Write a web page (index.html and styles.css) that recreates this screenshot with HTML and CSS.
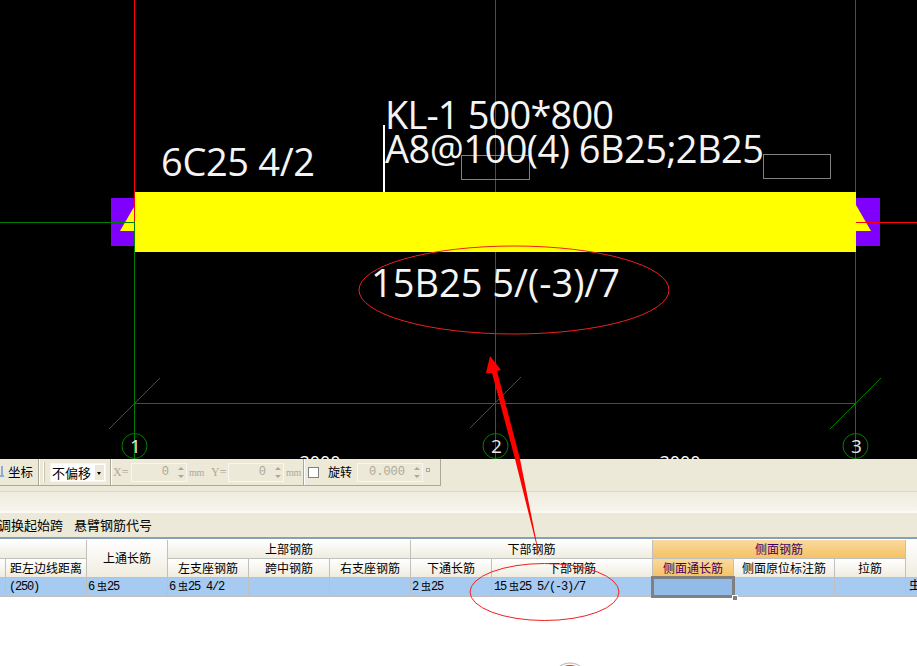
FILE: index.html
```html
<!DOCTYPE html>
<html lang="zh-CN">
<head>
    <meta charset="UTF-8">
    <title>梁平法表格</title>
    <link rel="stylesheet" href="styles.css">
</head>
<body>
    <div class="page">
        <!-- drawing area -->
        <svg class="canvas" width="917" height="459" viewBox="0 0 917 459">
            <rect class="col-box" x="111" y="198" width="24" height="48"/>
            <rect class="col-box" x="856" y="198" width="24" height="48"/>
            <polygon class="beam" points="134,207 120,231 134,231"/>
            <polygon class="beam" points="856,205 871,231 856,231"/>

            <line class="red" x1="134.5" y1="0" x2="134.5" y2="222"/>
            <line class="green" x1="134.5" y1="222" x2="134.5" y2="459"/>
            <line class="green" x1="0" y1="222.5" x2="134" y2="222.5"/>
            <line class="red" x1="855.5" y1="0" x2="855.5" y2="192"/>
            <line class="red" x1="856" y1="222.5" x2="917" y2="222.5"/>
            <line class="green" x1="855.5" y1="252" x2="855.5" y2="459"/>
            <line class="red" x1="495.5" y1="0" x2="495.5" y2="192"/>
            <line class="green" x1="495.5" y1="252" x2="495.5" y2="459"/>
            <line class="green" x1="134" y1="403.5" x2="856" y2="403.5"/>
            <line class="green" x1="109" y1="429" x2="160" y2="378"/>
            <line class="green" x1="470" y1="428" x2="521" y2="377"/>
            <line class="green" x1="830" y1="429" x2="881" y2="378"/>

            <rect class="beam" x="135" y="192" width="721" height="60"/>
            <line class="leader" x1="384" y1="125" x2="384" y2="192"/>
            <rect class="input-box" x="461.5" y="155.5" width="68" height="24"/>
            <rect class="input-box" x="763.5" y="154.5" width="67" height="24"/>

            <text class="label" x="385" y="129" textLength="229">KL-1 500*800</text>
            <text class="label" x="385" y="163" textLength="379">A8@100(4) 6B25;2B25</text>
            <text class="label" x="161" y="176" textLength="154">6C25 4/2</text>
            <text class="label" x="371" y="297" textLength="249">15B25 5/(-3)/7</text>

            <circle class="axis-ring" cx="134.5" cy="446" r="12.5"/>
            <circle class="axis-ring" cx="495.5" cy="446" r="12.5"/>
            <circle class="axis-ring" cx="855.5" cy="446" r="12.5"/>
            <text class="axis-num" x="135.5" y="453">1</text>
            <text class="axis-num" x="496.5" y="453">2</text>
            <text class="axis-num" x="856.5" y="453">3</text>
            <text class="dim" x="320" y="469">3000</text>
            <text class="dim" x="680" y="469">3000</text>
        </svg>

        <!-- offset toolbar -->
        <div class="toolbar-row">
            <div class="toolbar">
                <svg class="coord-icon" width="4" height="16" viewBox="0 0 4 16">
                    <path d="M2 2v9M0 12h4" fill="none" stroke="#2a6fd0" stroke-width="1"/>
                </svg>
                <span class="tool-label coord-label">坐标</span>
                <span class="sep"></span>
                <span class="grip"></span>
                <div class="select">
                    <span class="select-text">不偏移</span>
                    <span class="select-btn"></span>
                </div>
                <span class="sep sep-b"></span>
                <span class="coord-name">X=</span>
                <div class="spin">
                    <span class="spin-value">0</span>
                    <span class="spin-arrows"><i class="up"></i><i class="down"></i></span>
                </div>
                <span class="unit">mm</span>
                <span class="coord-name coord-y">Y=</span>
                <div class="spin">
                    <span class="spin-value">0</span>
                    <span class="spin-arrows"><i class="up"></i><i class="down"></i></span>
                </div>
                <span class="unit">mm</span>
                <span class="sep sep-c"></span>
                <span class="check"></span>
                <span class="tool-label rotate">旋转</span>
                <div class="spin spin-wide">
                    <span class="spin-value">0.000</span>
                    <span class="spin-arrows"><i class="up"></i><i class="down"></i></span>
                </div>
                <span class="degree"></span>
            </div>
        </div>
        <div class="strip"></div>
        <div class="action-row">
            <span>调换起始跨</span>
            <span>悬臂钢筋代号</span>
        </div>

        <!-- span table -->
        <div class="grid">
            <div class="head c-blank"></div>
            <div class="head c-top">上通长筋</div>
            <div class="head c-upper">上部钢筋</div>
            <div class="head c-lower">下部钢筋</div>
            <div class="head side c-side">侧面钢筋</div>
            <div class="head c-last"></div>

            <div class="head"></div>
            <div class="head">距左边线距离</div>
            <div class="head">左支座钢筋</div>
            <div class="head">跨中钢筋</div>
            <div class="head">右支座钢筋</div>
            <div class="head">下通长筋</div>
            <div class="head">下部钢筋</div>
            <div class="head side">侧面通长筋</div>
            <div class="head">侧面原位标注筋</div>
            <div class="head">拉筋</div>

            <div class="cell"></div>
            <div class="cell cell-first">(250)</div>
            <div class="cell">6<b>虫</b>25</div>
            <div class="cell">6<b>虫</b>25 4/2</div>
            <div class="cell"></div>
            <div class="cell"></div>
            <div class="cell">2<b>虫</b>25</div>
            <div class="cell cell-wide">15<b>虫</b>25 5/(-3)/7</div>
            <div class="cell selected"><span class="handle"></span></div>
            <div class="cell"></div>
            <div class="cell"></div>
            <div class="cell cell-end"><b>虫</b></div>
        </div>

        <!-- markup drawn over the screenshot -->
        <svg class="markup" width="917" height="666" viewBox="0 0 917 666">
            <ellipse class="mark" cx="514" cy="290" rx="155" ry="44"/>
            <ellipse class="mark" cx="544.5" cy="592" rx="74.5" ry="28.5"/>
            <polygon class="arrow" points="490,356 501,370 497,371 520,459 540,559 515,459 492,373 486,373"/>
            <circle class="stamp" cx="570" cy="681" r="18"/>
            <circle class="stamp-core" cx="570" cy="681" r="16"/>
        </svg>
    </div>
</body>
</html>
```

FILE: styles.css
```css
* {
    margin: 0;
    padding: 0;
    box-sizing: border-box;
}

body {
    background-color: white;
    color: #000;
    font-family: "Noto Sans CJK SC", sans-serif;
    font-size: 12px;
    overflow: hidden;
}

.page {
    position: relative;
    width: 917px;
    height: 666px;
    overflow: hidden;
}

/* drawing */
.canvas {
    display: block;
    background-color: #000;
}

.col-box { fill: #7f00ff; }
.beam { fill: #ffff00; }
.red { stroke: #ff0000; stroke-width: 1; }
.green { stroke: #008000; stroke-width: 1; }
.leader { stroke: #fff; stroke-width: 2; }

.input-box {
    fill: none;
    stroke: #808080;
    stroke-width: 1;
}

.label {
    fill: #f4f4f4;
    font-family: "Open Sans", sans-serif;
    font-size: 38px;
}

.axis-ring {
    fill: none;
    stroke: #008000;
    stroke-width: 1;
}

.axis-num {
    fill: #e8e8e8;
    font-family: "Open Sans", sans-serif;
    font-size: 19px;
    text-anchor: middle;
}

.dim {
    fill: #fff;
    font-family: "Open Sans", sans-serif;
    font-size: 18px;
    text-anchor: middle;
}

/* toolbars */
.toolbar-row {
    height: 33px;
    background-color: #ece9d8;
    border-bottom: 1px solid #ddd9c3;
}

.toolbar {
    display: flex;
    align-items: center;
    width: 441px;
    height: 27px;
    border-right: 1px solid #aca899;
    border-bottom: 1px solid #aca899;
}

.toolbar > * { flex: none; }

.tool-label {
    margin-left: 4px;
    font-size: 12px;
    line-height: 1;
}

.coord-label {
    width: 24px;
    font-size: 12.5px;
    white-space: nowrap;
}

.sep {
    width: 2px;
    height: 26px;
    margin-left: 6px;
    background-color: #aca899;
    border-right: 1px solid #fff;
}

.sep-b { margin-left: 4px; }
.sep-c { margin-left: 2px; }

.grip {
    width: 2px;
    height: 21px;
    margin-left: 3px;
    background-color: #c9c5b2;
    border-left: 1px solid #fff;
}

.select {
    display: flex;
    width: 56px;
    height: 19px;
    margin-left: 5px;
    padding: 1px 1px 1px 0;
    background-color: #fff;
    border: 1px solid #f7f6ef;
}

.select-text {
    flex: 1;
    padding-left: 1px;
    font-size: 13px;
    line-height: 15px;
}

.select-btn {
    position: relative;
    width: 9px;
    background-color: #ece9d8;
}

.select-btn::after {
    content: "";
    position: absolute;
    left: 2px;
    top: 7px;
    border-top: 3px solid #000;
    border-left: 2.5px solid transparent;
    border-right: 2.5px solid transparent;
}

.coord-name {
    width: 18px;
    margin-left: 1px;
    color: #aca899;
    font-family: "Liberation Serif", serif;
    font-size: 12px;
}

.coord-y { margin-left: 7px; width: 17px; }

.spin {
    display: flex;
    align-items: center;
    justify-content: flex-end;
    width: 56px;
    height: 19px;
    border: 1px solid #f7f6ef;
    color: #aca899;
    font-family: "Liberation Mono", monospace;
    font-size: 12px;
}

.spin-wide {
    width: 66px;
    margin-left: 5px;
}

.spin-value { margin-right: 9px; }

.spin-arrows {
    display: flex;
    flex-direction: column;
    gap: 5px;
    width: 6px;
    margin-right: 2px;
}

.spin-arrows i {
    display: block;
    width: 0;
    border-left: 3px solid transparent;
    border-right: 3px solid transparent;
}

.spin-arrows .up { border-bottom: 3px solid #aca899; }
.spin-arrows .down { border-top: 3px solid #aca899; }

.unit {
    width: 15px;
    margin-left: 2px;
    color: #aca899;
    font-family: "Liberation Serif", serif;
    font-size: 10px;
    letter-spacing: -0.3px;
}

.check {
    width: 11px;
    height: 11px;
    margin-left: 3px;
    background-color: #fff;
    border: 1px solid #808080;
}

.rotate { margin-left: 9px; }

.degree {
    width: 4px;
    height: 4px;
    margin: 0 0 5px 3px;
    border: 1px solid #aca899;
}

.strip {
    height: 21px;
    background: linear-gradient(#efecdf, #f6f4ec);
    border-bottom: 2px solid #fbfaf5;
}

.action-row {
    display: flex;
    align-items: center;
    gap: 11px;
    height: 26px;
    padding-bottom: 1px;
    background-color: #ece9d8;
    border-bottom: 2px solid #86a0b8;
    font-size: 13px;
}

.action-row span:first-child { margin-left: -2px; }

/* table */
.grid {
    display: grid;
    grid-template-columns: 6px 81px 81px 81px 81px 81px 81px 161px 81px 101px 71px 12px;
    grid-template-rows: 19px 19px 19px;
    margin-top: 1px;
}

.head {
    display: flex;
    align-items: center;
    justify-content: center;
    overflow: hidden;
    padding-bottom: 2px;
    background: linear-gradient(#fff, #efecdf);
    border-right: 1px solid #c0c0c0;
    border-bottom: 1px solid #c0c0c0;
    font-size: 12px;
    white-space: nowrap;
}

.c-blank { grid-column: span 2; }
.c-top { grid-row: span 2; }
.c-upper { grid-column: span 3; }
.c-lower { grid-column: span 2; }
.c-side { grid-column: span 3; }
.c-last { grid-row: span 2; }

.head.side {
    background: linear-gradient(#fad9a0, #f5c264);
    color: #400060;
}

.cell {
    overflow: hidden;
    padding-left: 1px;
    background-color: #a6caf0;
    border-right: 1px solid #c0c0c0;
    border-bottom: 1px solid #c0c0c0;
    font-family: "Liberation Mono", monospace;
    font-size: 12px;
    line-height: 18px;
    letter-spacing: -1.2px;
    white-space: pre;
}

.cell b {
    margin: 0 0 0 3px;
    font-family: "Noto Sans CJK SC", sans-serif;
    font-size: 10px;
    line-height: 1;
    font-weight: normal;
    letter-spacing: 0;
}

.cell-first { padding-left: 3px; }
.cell-wide { padding-left: 2px; }
.cell-end b { margin: 0 0 0 2px; font-size: 12px; }

.selected {
    position: relative;
    z-index: 1;
    margin: -2px -1px -1px -2px;
    overflow: visible;
    background-color: #92bbe8;
    border: 3px solid #808080;
}

.handle {
    position: absolute;
    right: -6px;
    bottom: -6px;
    width: 6px;
    height: 6px;
    background-color: #808080;
    border: 1px solid #fff;
}

/* red markup */
.markup {
    position: absolute;
    top: 0;
    left: 0;
    z-index: 2;
}

.mark {
    fill: none;
    stroke: #f02020;
    stroke-width: 1;
}

.arrow { fill: #ff0000; }

.stamp {
    fill: none;
    stroke: #b0b0b0;
    stroke-width: 1;
}

.stamp-core { fill: #a8552c; }
```
